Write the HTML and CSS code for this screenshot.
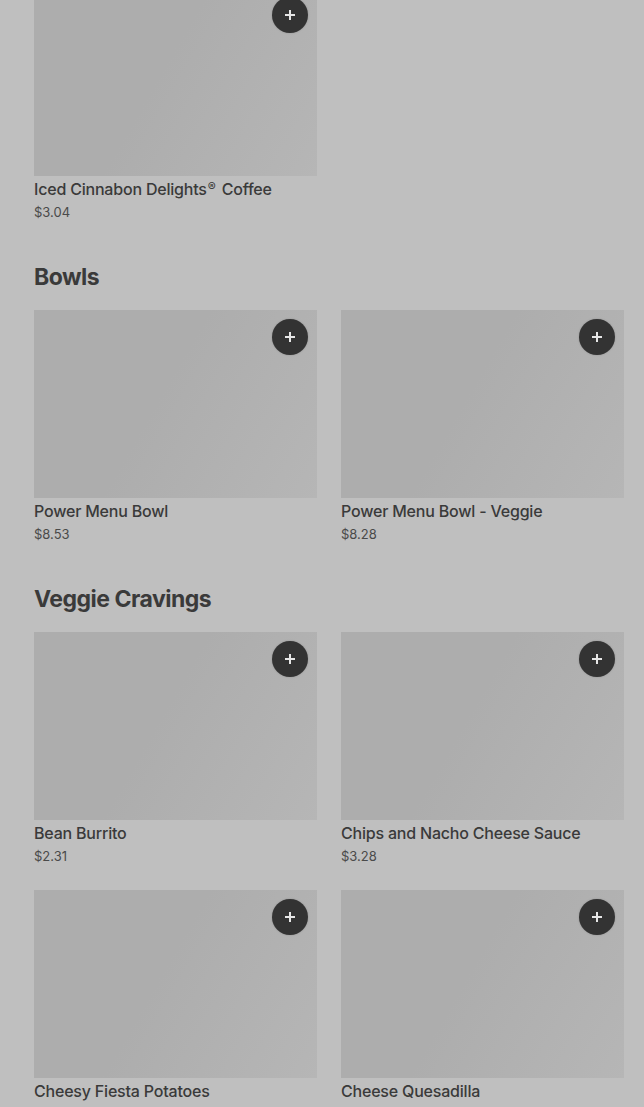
FILE: index.html
```html
<!DOCTYPE html>
<html>
<head>
<meta charset="utf-8">
<link rel="stylesheet" href="styles.css">
</head>
<body>
<main class="menu">
  <section class="section section-cut">
    <div class="grid">
      <div class="card">
        <div class="thumb"><button class="add" aria-label="Add"><svg viewBox="0 0 16 16" width="16" height="16"><path d="M8 3v10M3 8h10" stroke="#e6e6e6" stroke-width="2"/></svg></button></div>
        <div class="name">Iced Cinnabon Delights<sup>®</sup> Coffee</div>
        <div class="price">$3.04</div>
      </div>
    </div>
  </section>

  <section class="section">
    <h2 class="heading">Bowls</h2>
    <div class="grid">
      <div class="card">
        <div class="thumb"><button class="add" aria-label="Add"><svg viewBox="0 0 16 16" width="16" height="16"><path d="M8 3v10M3 8h10" stroke="#e6e6e6" stroke-width="2"/></svg></button></div>
        <div class="name">Power Menu Bowl</div>
        <div class="price">$8.53</div>
      </div>
      <div class="card">
        <div class="thumb"><button class="add" aria-label="Add"><svg viewBox="0 0 16 16" width="16" height="16"><path d="M8 3v10M3 8h10" stroke="#e6e6e6" stroke-width="2"/></svg></button></div>
        <div class="name">Power Menu Bowl - Veggie</div>
        <div class="price">$8.28</div>
      </div>
    </div>
  </section>

  <section class="section">
    <h2 class="heading">Veggie Cravings</h2>
    <div class="grid">
      <div class="card">
        <div class="thumb"><button class="add" aria-label="Add"><svg viewBox="0 0 16 16" width="16" height="16"><path d="M8 3v10M3 8h10" stroke="#e6e6e6" stroke-width="2"/></svg></button></div>
        <div class="name">Bean Burrito</div>
        <div class="price">$2.31</div>
      </div>
      <div class="card">
        <div class="thumb"><button class="add" aria-label="Add"><svg viewBox="0 0 16 16" width="16" height="16"><path d="M8 3v10M3 8h10" stroke="#e6e6e6" stroke-width="2"/></svg></button></div>
        <div class="name">Chips and Nacho Cheese Sauce</div>
        <div class="price">$3.28</div>
      </div>
      <div class="card">
        <div class="thumb"><button class="add" aria-label="Add"><svg viewBox="0 0 16 16" width="16" height="16"><path d="M8 3v10M3 8h10" stroke="#e6e6e6" stroke-width="2"/></svg></button></div>
        <div class="name">Cheesy Fiesta Potatoes</div>
        <div class="price">$2.49</div>
      </div>
      <div class="card">
        <div class="thumb"><button class="add" aria-label="Add"><svg viewBox="0 0 16 16" width="16" height="16"><path d="M8 3v10M3 8h10" stroke="#e6e6e6" stroke-width="2"/></svg></button></div>
        <div class="name">Cheese Quesadilla</div>
        <div class="price">$4.99</div>
      </div>
    </div>
  </section>
</main>
</body>
</html>
```

FILE: styles.css
```css
html, body {
  margin: 0;
  padding: 0;
  background: #bfbfbf;
  overflow: hidden;
}
body {
  font-family: Inter, "Liberation Sans", sans-serif;
  color: #383838;
  height: 1107px;
}
.menu {
  padding: 0 34px;
}
.section-cut {
  margin-top: -12px;
}
.section {
  padding-bottom: 42px;
}
.heading {
  margin: 0 0 19px;
  font-size: 23px;
  line-height: 28px;
  font-weight: 700;
  letter-spacing: -0.5px;
  color: #3a3a3a;
}
.grid {
  display: grid;
  grid-template-columns: 283px 283px;
  column-gap: 24px;
  row-gap: 25px;
}
.card {
  display: flex;
  flex-direction: column;
}
.thumb {
  position: relative;
  height: 188px;
  background: linear-gradient(120deg, #adadad 0%, #adadad 45%, #b6b6b6 100%);
}
.add {
  position: absolute;
  top: 9px;
  right: 9px;
  width: 36px;
  height: 36px;
  border-radius: 50%;
  border: none;
  padding: 0;
  background: #333333;
  display: flex;
  align-items: center;
  justify-content: center;
  box-shadow: 0 0 2px rgba(0,0,0,0.2);
}
.add svg {
  display: block;
}
.name {
  margin-top: 3px;
  font-size: 16px;
  line-height: 20px;
  font-weight: 500;
  letter-spacing: -0.2px;
  color: #3a3a3a;
}
.name sup {
  font-size: 12px;
  vertical-align: 4px;
  line-height: 0;
  margin: 0 2px 0 1px;
}
.price {
  margin-top: 4px;
  font-size: 13px;
  line-height: 18px;
  color: #4a4a4a;
}
```
